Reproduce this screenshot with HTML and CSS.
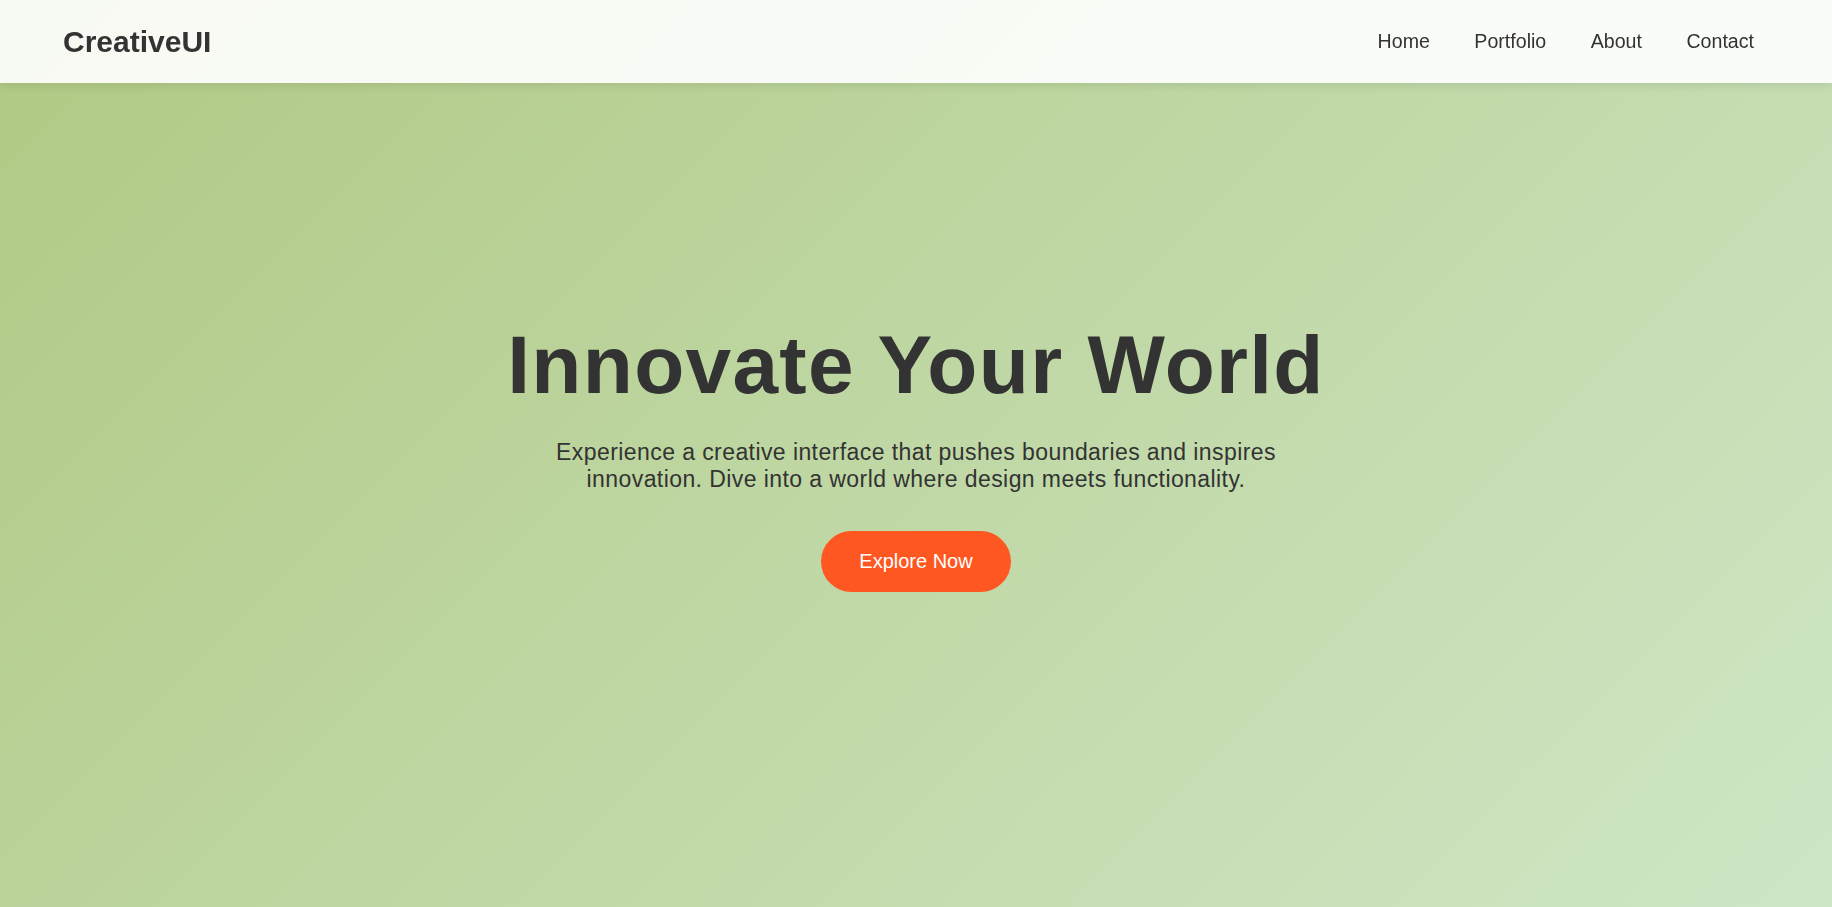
FILE: index.html
```html
<!DOCTYPE html>
<html lang="en">
<head>
<meta charset="UTF-8">
<title>CreativeUI</title>
<link rel="stylesheet" href="styles.css">
</head>
<body>
<header class="site-header">
  <div class="logo">CreativeUI</div>
  <nav class="nav">
    <a href="#" class="nav-link">Home</a>
    <a href="#" class="nav-link">Portfolio</a>
    <a href="#" class="nav-link">About</a>
    <a href="#" class="nav-link">Contact</a>
  </nav>
</header>
<main class="hero">
  <div class="hero-content">
    <h1 class="hero-title">Innovate Your World</h1>
    <p class="hero-text">Experience a creative interface that pushes boundaries and inspires innovation. Dive into a world where design meets functionality.</p>
    <a href="#" class="cta">Explore Now</a>
  </div>
</main>
</body>
</html>
```

FILE: styles.css
```css
* {
  box-sizing: border-box;
}

html, body {
  margin: 0;
  padding: 0;
  height: 100%;
}

body {
  font-family: "Liberation Sans", Arial, sans-serif;
  color: #333;
  background: linear-gradient(135deg, #b0c983 0%, #cfe6c6 100%);
  min-height: 100vh;
  overflow: hidden;
}

.site-header {
  position: fixed;
  top: 0;
  left: 0;
  right: 0;
  height: 83px;
  display: flex;
  align-items: center;
  justify-content: space-between;
  padding: 0 78px 0 63px;
  background: rgba(255, 255, 255, 0.9);
  box-shadow: 0 2px 10px rgba(0, 0, 0, 0.1);
  z-index: 10;
}

.logo {
  font-size: 30px;
  font-weight: 700;
  color: #333;
}

.nav {
  display: flex;
  gap: 44.5px;
}

.nav-link {
  font-size: 19.6px;
  color: #333;
  text-decoration: none;
}

.hero {
  height: 100vh;
  display: flex;
  align-items: center;
  justify-content: center;
  text-align: center;
}

.hero-content {
  display: flex;
  flex-direction: column;
  align-items: center;
  margin-top: 2px;
}

.hero-title {
  margin: 0 0 27px;
  font-size: 82px;
  font-weight: 700;
  letter-spacing: 1.3px;
  color: #333;
}

.hero-text {
  margin: 0 0 38px;
  max-width: 800px;
  font-size: 23px;
  letter-spacing: 0.42px;
  line-height: 27px;
  color: #333;
}

.cta {
  display: inline-block;
  padding: 19px 38px;
  border-radius: 40px;
  background: #ff5722;
  color: #fff;
  font-size: 20px;
  line-height: 23px;
  text-decoration: none;
}
```
